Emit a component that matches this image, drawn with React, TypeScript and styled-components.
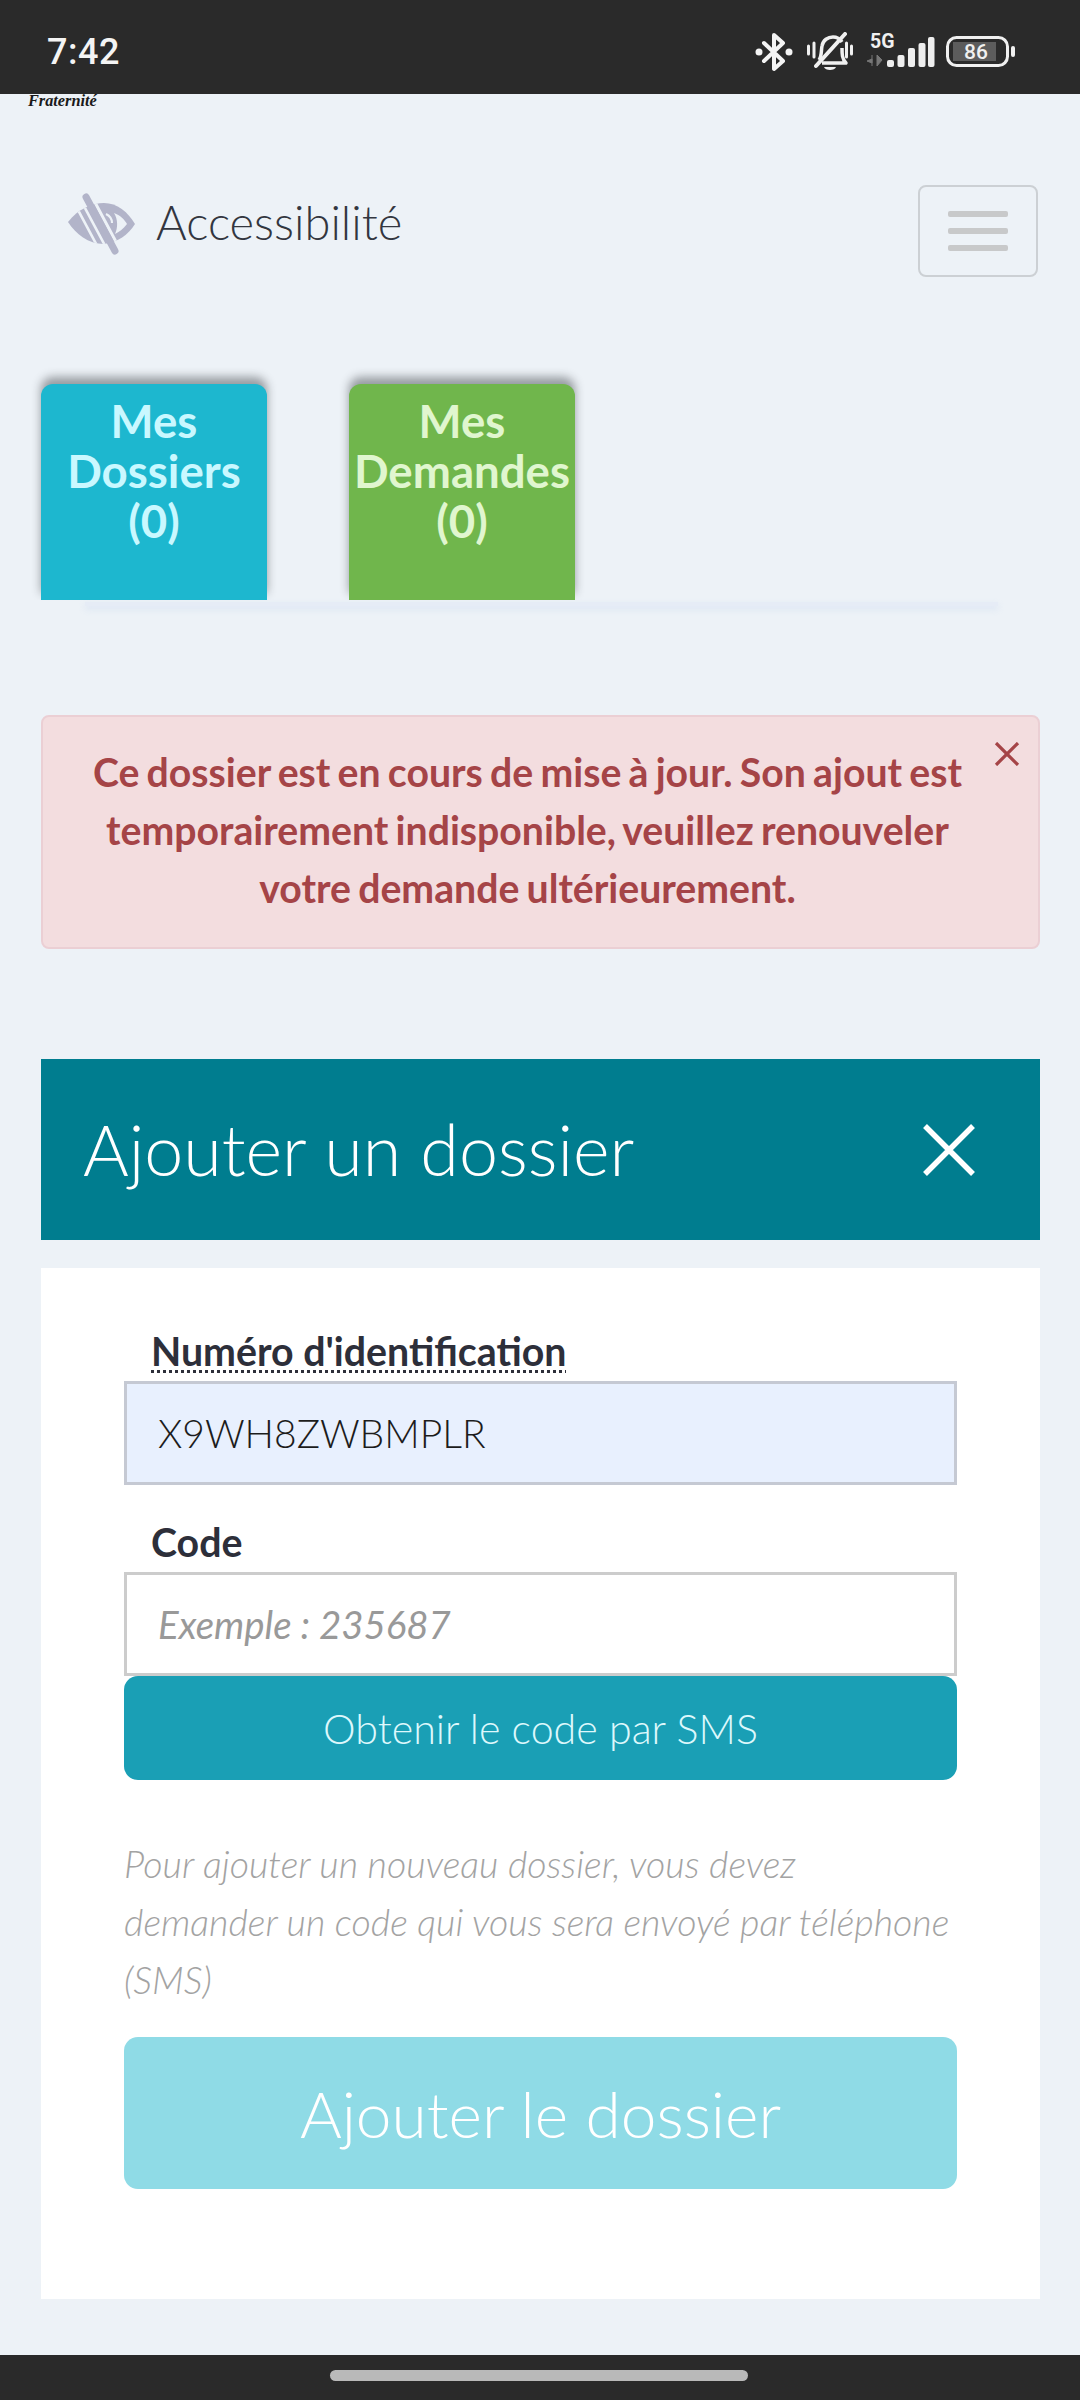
import React from "react";
import styled, {createGlobalStyle} from "styled-components";

const GlobalStyle = createGlobalStyle`
  * {
    box-sizing: border-box;
  }
  html, body {
    margin: 0;
    padding: 0;
    background: #edf2f7;
    font-family: "Lato", "Liberation Sans", sans-serif;
  }
`

const Screen = styled.div`
  width: 1080px;
  height: 2400px;
  display: flex;
  flex-direction: column;
  overflow: hidden;
  background: #edf2f7;
`

const StatusBar = styled.div`
  height: 94px;
  flex: none;
  background: #2a2a2a;
  display: flex;
  align-items: center;
  justify-content: space-between;
  padding: 9px 64px 0 47px;
  color: #f4f4f4;
`

const Clock = styled.span`
  font-family: "Roboto", sans-serif;
  font-size: 36px;
  font-weight: 500;
  letter-spacing: 0.5px;
`

const StatusIcons = styled.div`
  display: flex;
  align-items: center;
  gap: 14px;
`

const SignalSvg = styled.svg`
  margin-bottom: 8px;
`

const BatterySvg = styled.svg`
  margin-left: -3px;
`

const Content = styled.main`
  flex: 1;
  display: flex;
  flex-direction: column;
`

const Motto = styled.div`
  height: 18px;
  padding-left: 28px;
  font-family: "Liberation Serif", serif;
  font-size: 16.3px;
  line-height: 13px;
  font-weight: 700;
  font-style: italic;
  color: #1a1a1a;
`

const NavRow = styled.nav`
  margin-top: 73px;
  padding: 0 42px 0 67px;
  display: flex;
  align-items: center;
  justify-content: space-between;
`

const Brand = styled.a`
  display: flex;
  align-items: center;
  gap: 19px;
  margin-bottom: 14px;
  font-size: 47px;
  font-weight: 300;
  color: #33363f;
`

const BrandName = styled.span`
  margin-bottom: 5px;
`

const Toggler = styled.button`
  width: 120px;
  height: 92px;
  padding: 0;
  background: transparent;
  border: 2px solid #ccd0d4;
  border-radius: 8px;
  display: flex;
  flex-direction: column;
  align-items: center;
  justify-content: center;
  gap: 11px;
`

const TogglerBar = styled.span`
  width: 60px;
  height: 6px;
  border-radius: 2px;
  background: #c8c9ca;
`

const Tabs = styled.div`
  margin-top: 107px;
  padding-left: 41px;
  display: flex;
  gap: 82px;
`

const Tab = styled.div<{ $bg: string, $fg: string }>`
  width: 226px;
  height: 216px;
  padding-top: 12px;
  border-radius: 12px 12px 0 0;
  background: ${props => props.$bg};
  color: ${props => props.$fg};
  font-size: 45.6px;
  line-height: 50px;
  font-weight: 700;
  text-align: center;
  box-shadow: 0 -7px 10px rgba(30, 35, 40, 0.42);
  clip-path: inset(-30px -30px 0 -30px);
`

const TabRule = styled.div`
  height: 4px;
  margin: 2px 82px 0 85px;
  background: #e6ecf6;
  box-shadow: 0 3px 6px rgba(170, 195, 235, 0.3);
`

const Alert = styled.div`
  position: relative;
  margin: 109px 40px 0 41px;
  height: 234px;
  padding: 26px 53px 0 27px;
  background: #f3dddf;
  border: 2px solid #ebcfd4;
  border-radius: 8px;
  color: #a54447;
  font-size: 39.2px;
  line-height: 58px;
  font-weight: 700;
  word-spacing: -2.3px;
  text-align: center;
`

const AlertClose = styled.svg`
  position: absolute;
  top: 25px;
  right: 18px;
`

const PanelHeader = styled.div`
  margin: 110px 40px 0 41px;
  height: 181px;
  padding: 0 65px 0 42px;
  background: #007d8f;
  color: #ffffff;
  display: flex;
  align-items: center;
  justify-content: space-between;
  font-size: 70px;
  font-weight: 300;
`

const PanelTitle = styled.span`
  margin-top: -2px;
`

const FormCard = styled.form`
  margin: 28px 40px 0 41px;
  height: 1031px;
  padding: 63px 83px 0;
  background: #ffffff;
  display: flex;
  flex-direction: column;
`

const FieldLabel = styled.label<{ $hint?: boolean }>`
  align-self: flex-start;
  margin-left: 27px;
  padding-bottom: 10px;
  color: #2d2f3a;
  font-size: 39.3px;
  line-height: 40px;
  font-weight: 700;
  text-decoration: ${props => props.$hint ? "underline dotted 3px" : "none"};
  text-underline-offset: 4px;
`

const CodeLabel = styled(FieldLabel)`
  margin-top: 37px;
`

const TextInput = styled.input<{ $filled?: boolean }>`
  display: block;
  width: 100%;
  height: 104px;
  padding: 0 31px;
  border: 3px solid ${props => props.$filled ? "#c5c9d3" : "#cccccc"};
  border-radius: 0;
  outline: none;
  background: ${props => props.$filled ? "#e8f0fe" : "#ffffff"};
  color: #1c1c1c;
  font-family: inherit;
  font-size: 39px;
  font-weight: 300;

  &::placeholder {
    color: #999999;
    font-size: 38.4px;
    font-style: italic;
    font-weight: 400;
    opacity: 1;
  }
`

const SmsButton = styled.button`
  flex: none;
  height: 104px;
  border: none;
  border-radius: 14px;
  background: #1a9fb5;
  color: #ddf8fc;
  font-family: inherit;
  font-size: 41.2px;
  font-weight: 300;
`

const HelpText = styled.p`
  margin: 55px 0 0;
  color: #a3a3a3;
  font-size: 37.6px;
  line-height: 58px;
  font-weight: 300;
  font-style: italic;
`

const SubmitButton = styled.button`
  flex: none;
  margin-top: 28px;
  height: 152px;
  border: none;
  border-radius: 14px;
  background: #8fdbe6;
  color: #ffffff;
  font-family: inherit;
  font-size: 64px;
  font-weight: 300;
`

const NavBar = styled.div`
  height: 45px;
  flex: none;
  background: #2a2a2a;
  display: flex;
  justify-content: center;
  padding: 15px 0 0 0;
`

const HomePill = styled.div`
  width: 418px;
  height: 11px;
  margin-right: 3px;
  border-radius: 6px;
  background: #b9b9b9;
`

const BluetoothIcon = () => (
  <svg width="38" height="40" viewBox="0 0 38 40" fill="none" stroke="#f4f4f4">
    <path d="M9 11 L28 29 L19 37 V3 L28 11 L9 29" strokeWidth="4" strokeLinejoin="round" strokeLinecap="round"/>
    <circle cx="4" cy="20" r="3.5" fill="#f4f4f4" stroke="none"/>
    <circle cx="34" cy="20" r="3.5" fill="#f4f4f4" stroke="none"/>
  </svg>
)

const MutedBellIcon = () => (
  <svg width="46" height="40" viewBox="0 0 46 40" fill="none" stroke="#f0f0f0">
    <path d="M12 28 C15 24 14 19 15 14 C16 8 21 5 26 5 C30 5 33 7 35 10" strokeWidth="3.5"/>
    <path d="M35 16 C35 22 35 27 39 31 H15" strokeWidth="3.5" strokeLinejoin="round"/>
    <path d="M9 34 L38 2" strokeWidth="4" strokeLinecap="round"/>
    <path d="M17 35 H29 C28 39 18 39 17 35Z" fill="#f0f0f0" stroke="none"/>
    <path d="M1.5 14 V22 M7 11 V25 M39.5 11 V25 M44.5 14 V22" strokeWidth="3" strokeLinecap="round"/>
  </svg>
)

const SignalIcon = () => (
  <SignalSvg width="68" height="40" viewBox="0 -4 68 40">
    <text x="3" y="16" fontFamily="Roboto, sans-serif" fontWeight="700" fontSize="19.5" fill="#f0f0f0">5G</text>
    <path d="M5 27 L0 29 L5 31Z M5 23 V34 M10 23 V34 L15 28Z" fill="#777777" stroke="#777777" strokeWidth="1"/>
    <rect x="20" y="28" width="7" height="7" rx="2" fill="#eeeeee"/>
    <rect x="30.5" y="23" width="7" height="12" rx="2" fill="#eeeeee"/>
    <rect x="41" y="16" width="7" height="19" rx="2" fill="#eeeeee"/>
    <rect x="51.5" y="11" width="7" height="24" rx="2" fill="#eeeeee"/>
    <rect x="61" y="5" width="6.5" height="30" rx="2" fill="#eeeeee"/>
  </SignalSvg>
)

const BatteryIcon = () => (
  <BatterySvg width="70" height="32" viewBox="0 0 70 32">
    <rect x="1.5" y="1.5" width="60" height="28" rx="9" fill="none" stroke="#f0f0f0" strokeWidth="3"/>
    <rect x="7" y="6" width="43" height="19" fill="#5c5c5c"/>
    <text x="18" y="23" fontFamily="Roboto, sans-serif" fontWeight="500" fontSize="21" fill="#f0f0f0">86</text>
    <rect x="65" y="10" width="4" height="11" rx="2" fill="#f0f0f0"/>
  </BatterySvg>
)

// eye with a bar through it, left half striped
const EyeIcon = () => (
  <svg width="70" height="64" viewBox="7 8 70 64">
    <defs>
      <clipPath id="lens">
        <path d="M8 38 C18 25 32 19 44 19 C57 19 68 28 75 40 C68 51 58 58 44 60 C28 60 16 50 8 38Z"/>
      </clipPath>
    </defs>
    <g clipPath="url(#lens)">
      <rect x="0" y="0" width="84" height="80" fill="#b2b4c9"/>
      <path d="M17.5 10 L49.5 70 M9.5 10 L41.5 70" stroke="#edf2f7" strokeWidth="2.6"/>
      <path d="M30.5 10 L62.5 70" stroke="#edf2f7" strokeWidth="3"/>
      <path d="M54 29 C60 31 65 36 67 40 C63 45 59 48 55 50 C58 44 58 35 54 29Z" fill="#edf2f7"/>
      <path d="M46 30 C50 32 52 35 52 39" stroke="#edf2f7" strokeWidth="2.2" fill="none"/>
    </g>
    <path d="M26 13 L55 67" stroke="#b2b4c9" strokeWidth="7" strokeLinecap="round"/>
  </svg>
)

const App = () => (
  <Screen>
    <GlobalStyle/>
    <StatusBar>
      <Clock>7:42</Clock>
      <StatusIcons>
        <BluetoothIcon/>
        <MutedBellIcon/>
        <SignalIcon/>
        <BatteryIcon/>
      </StatusIcons>
    </StatusBar>
    <Content>
      <Motto>Fraternité</Motto>
      <NavRow>
        <Brand>
          <EyeIcon/>
          <BrandName>Accessibilité</BrandName>
        </Brand>
        <Toggler type="button">
          <TogglerBar/>
          <TogglerBar/>
          <TogglerBar/>
        </Toggler>
      </NavRow>
      <Tabs>
        <Tab $bg="#1db7cf" $fg="#c9f8ff">Mes<br/>Dossiers<br/>(0)</Tab>
        <Tab $bg="#70b64c" $fg="#e0f6cf">Mes<br/>Demandes<br/>(0)</Tab>
      </Tabs>
      <TabRule/>
      <Alert>
        Ce dossier est en cours de mise à jour. Son ajout est temporairement indisponible, veuillez renouveler votre demande ultérieurement.
        <AlertClose width="26" height="24" viewBox="0 0 26 24">
          <path d="M2 1 L24 23 M24 1 L2 23" stroke="#a54447" strokeWidth="3.2"/>
        </AlertClose>
      </Alert>
      <PanelHeader>
        <PanelTitle>Ajouter un dossier</PanelTitle>
        <svg width="52" height="52" viewBox="0 0 52 52">
          <path d="M2 2 L50 50 M50 2 L2 50" stroke="#ffffff" strokeWidth="5.5"/>
        </svg>
      </PanelHeader>
      <FormCard>
        <FieldLabel $hint>Numéro d'identification</FieldLabel>
        <TextInput $filled readOnly value="X9WH8ZWBMPLR"/>
        <CodeLabel>Code</CodeLabel>
        <TextInput readOnly placeholder="Exemple : 235687"/>
        <SmsButton type="button">Obtenir le code par SMS</SmsButton>
        <HelpText>Pour ajouter un nouveau dossier, vous devez<br/>demander un code qui vous sera envoyé par téléphone<br/>(SMS)</HelpText>
        <SubmitButton type="button">Ajouter le dossier</SubmitButton>
      </FormCard>
    </Content>
    <NavBar>
      <HomePill/>
    </NavBar>
  </Screen>
)

export default App
